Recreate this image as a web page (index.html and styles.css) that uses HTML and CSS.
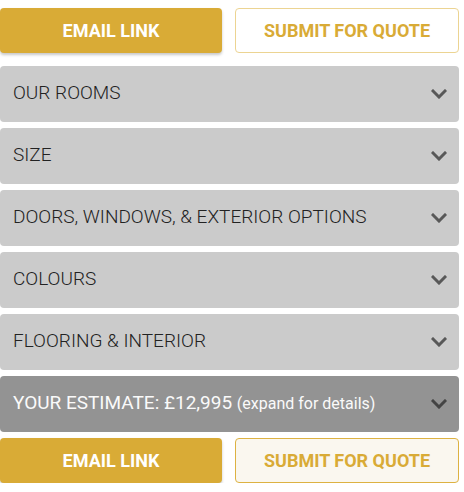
FILE: index.html
```html
<!DOCTYPE html>
<html>
<head>
<meta charset="utf-8">
<link rel="stylesheet" href="styles.css">
</head>
<body>
<div class="wrap">
  <div class="actions top">
    <button class="btn primary">EMAIL LINK</button>
    <button class="btn outline">SUBMIT FOR QUOTE</button>
  </div>
  <div class="panels">
    <div class="panel"><span>OUR ROOMS</span><svg class="chev" viewBox="0 0 16 10"><polyline points="2,2 8,8 14,2"/></svg></div>
    <div class="panel"><span>SIZE</span><svg class="chev" viewBox="0 0 16 10"><polyline points="2,2 8,8 14,2"/></svg></div>
    <div class="panel"><span>DOORS, WINDOWS, &amp; EXTERIOR OPTIONS</span><svg class="chev" viewBox="0 0 16 10"><polyline points="2,2 8,8 14,2"/></svg></div>
    <div class="panel"><span>COLOURS</span><svg class="chev" viewBox="0 0 16 10"><polyline points="2,2 8,8 14,2"/></svg></div>
    <div class="panel"><span>FLOORING &amp; INTERIOR</span><svg class="chev" viewBox="0 0 16 10"><polyline points="2,2 8,8 14,2"/></svg></div>
    <div class="panel estimate"><span>YOUR ESTIMATE: £12,995 <small>(expand for details)</small></span><svg class="chev" viewBox="0 0 16 10"><polyline points="2,2 8,8 14,2"/></svg></div>
  </div>
  <div class="actions bottom">
    <button class="btn primary">EMAIL LINK</button>
    <button class="btn outline alt">SUBMIT FOR QUOTE</button>
  </div>
</div>
</body>
</html>
```
FILE: styles.css
```css
* { box-sizing: border-box; }
html, body { margin: 0; padding: 0; background: #fff; }
body { font-family: Roboto, "Liberation Sans", sans-serif; }
.wrap { width: 459px; padding-top: 8px; }
.actions { display: grid; grid-template-columns: 222px 224px; column-gap: 13px; }
.actions.top { margin-bottom: 13px; }
.actions.bottom { margin-top: 6px; }
.btn {
  height: 45px;
  border-radius: 4px;
  font-family: Roboto, "Liberation Sans", sans-serif;
  font-weight: 700;
  font-size: 18px;
  cursor: pointer;
  padding: 0;
}
.btn.primary {
  background: #d9ab36;
  color: #fff;
  border: none;
  box-shadow: 0 2px 3px rgba(0,0,0,0.22);
}
.btn.outline {
  background: #fff;
  color: #d9ab36;
  border: 1px solid #ecd492;
}
.btn.outline.alt {
  background: #faf7ef;
  border-color: #ddb242;
}
.panels { display: flex; flex-direction: column; gap: 6px; }
.panel {
  height: 56px;
  background: #cbcbcb;
  border-radius: 4px;
  display: flex;
  align-items: center;
  justify-content: space-between;
  padding: 0 12px 0 13px;
  color: #222;
  font-size: 19px;
  font-weight: 300;
}
.panel span { margin-top: -3px; }
.panel.estimate { background: #939393; color: #fafafa; font-weight: 400; }
.panel small { font-size: 16px; }
.chev { width: 16px; height: 10px; fill: none; stroke: #585858; stroke-width: 3; stroke-linecap: square; }
.estimate .chev { stroke: #444; }
```
